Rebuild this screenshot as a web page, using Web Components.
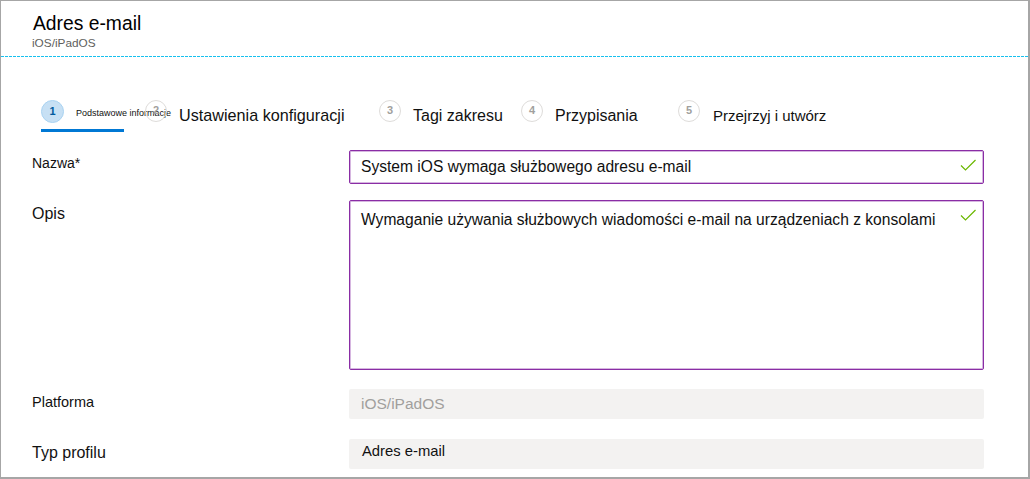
<!DOCTYPE html>
<html lang="pl">
<head>
<meta charset="utf-8">
<title>Adres e-mail</title>
<style>
html, body { margin: 0; background: #fff; }
body { font-family: "Liberation Sans", Arial, sans-serif; color: #111; }
</style>
</head>
<body>
<profile-page>
  <blade-header slot="header" title="Adres e-mail" subtitle="iOS/iPadOS"></blade-header>
  <wizard-steps slot="steps">
    <wizard-step num="1" active style="--w:104px;--gap:12px;--fs:9px;--ty:-3px">Podstawowe informacje</wizard-step>
    <wizard-step num="2" style="--w:234px;--gap:12px;--fs:16.2px;--ty:-1px">Ustawienia konfiguracji</wizard-step>
    <wizard-step num="3" style="--w:142px;--gap:12px">Tagi zakresu</wizard-step>
    <wizard-step num="4" style="--w:157px;--gap:12px">Przypisania</wizard-step>
    <wizard-step num="5" style="--w:180px;--gap:13px;--fs:15px">Przejrzyj i utwórz</wizard-step>
  </wizard-steps>
  <form-row label="Nazwa*" height="30" gap="20" style="--label:14px"><text-box valid>System iOS wymaga służbowego adresu e-mail</text-box></form-row>
  <form-row label="Opis" height="170" gap="19" style="--label:16px;--top:4px"><text-box valid multiline>Wymaganie używania służbowych wiadomości e-mail na urządzeniach z konsolami</text-box></form-row>
  <form-row label="Platforma" height="30" gap="20"><text-box disabled>iOS/iPadOS</text-box></form-row>
  <form-row label="Typ profilu" height="30" gap="0" style="--label:16px;--top:4px"><text-box readonly>Adres e-mail</text-box></form-row>
</profile-page>
<script>
// page frame, grey edge all round
class ProfilePage extends HTMLElement {
  constructor() {
    super();
    this.attachShadow({ mode: "open" }).innerHTML = `
<style>
:host {
  display: block;
  box-sizing: border-box;
  width: 1030px;
  height: 479px;
  overflow: hidden;
  border-style: solid;
  border-color: #a6a6a6;
  border-width: 1px 2px 2px 1px;
}
.form {
  padding: 0 44px 0 31px;
}
</style>
<slot name="header"></slot>
<slot name="steps"></slot>
<div class="form"><slot></slot></div>`;
  }
}

class BladeHeader extends HTMLElement {
  constructor() {
    super();
    this.attachShadow({ mode: "open" }).innerHTML = `
<style>
:host {
  display: block;
  height: 56px;
  box-sizing: border-box;
  padding: 11px 0 0 31px;
  background: repeating-linear-gradient(90deg, #17c0ee 0 3px, #fff 3px 4px) left bottom / 100% 1px no-repeat;
}
.title { font-size: 19.3px; line-height: 24px; color: #000; margin-left: 1px; }
.sub { font-size: 11.8px; line-height: 14px; color: #605e5c; }
</style>
<div class="title">${this.getAttribute("title")}</div>
<div class="sub">${this.getAttribute("subtitle")}</div>`;
  }
}

class WizardSteps extends HTMLElement {
  constructor() {
    super();
    this.attachShadow({ mode: "open" }).innerHTML = `
<style>
:host {
  display: flex;
  box-sizing: border-box;
  height: 93px;
  padding: 43px 0 0 40px;
}
</style>
<slot></slot>`;
  }
}

class WizardStep extends HTMLElement {
  constructor() {
    super();
    this.attachShadow({ mode: "open" }).innerHTML = `
<style>
:host {
  display: flex;
  flex: none;
  align-items: flex-start;
  gap: var(--gap, 12px);
  width: var(--w, 120px);
  height: 32px;
  position: relative;
  white-space: nowrap;
  font-size: var(--fs, 16px);
  color: #111;
}
.num {
  flex: none;
  box-sizing: border-box;
  width: 22px;
  height: 22px;
  border-radius: 50%;
  border: 1.5px solid #dedcda;
  color: #a19f9d;
  font-size: 11px;
  font-weight: 700;
  line-height: 18px;
  text-align: center;
}
.label { line-height: 22px; margin-top: 5px; transform: translateY(var(--ty, 0)); }
:host([active]) .num {
  width: 23px;
  height: 23px;
  background: #c7e0f4;
  border-color: #a9d3f2;
  color: #005a9e;
  line-height: 20px;
}
:host([active]) .bar {
  position: absolute;
  left: 0;
  top: 29px;
  width: 83px;
  height: 3px;
  background: #0078d4;
}
</style>
<span class="num">${this.getAttribute("num")}</span>
<span class="label"><slot></slot></span>
<span class="bar"></span>`;
  }
}

class FormRow extends HTMLElement {
  constructor() {
    super();
    const h = this.getAttribute("height");
    const gap = this.getAttribute("gap");
    this.attachShadow({ mode: "open" }).innerHTML = `
<style>
:host {
  display: grid;
  grid-template-columns: 317px 635px;
  height: ${h}px;
  margin-bottom: ${gap}px;
  font-size: var(--label, 14.5px);
  color: #111;
}
.lbl { line-height: 20px; margin-top: var(--top, 3px); }
</style>
<div class="lbl">${this.getAttribute("label")}</div>
<slot></slot>`;
  }
}

class TextBox extends HTMLElement {
  constructor() {
    super();
    const tick = this.hasAttribute("valid")
      ? `<svg viewBox="0 0 16 12" width="16" height="12"><path d="M1 6.5 5.5 11 15.5 1" fill="none" stroke="#6bb700" stroke-width="1.2"/></svg>`
      : "";
    this.attachShadow({ mode: "open" }).innerHTML = `
<style>
:host {
  display: block;
  box-sizing: border-box;
  height: 100%;
  position: relative;
  border-radius: 2px;
  padding: 0 12px;
  font-size: 15.6px;
  line-height: 30px;
  background: #f3f2f1;
  color: #111;
}
:host([valid]) {
  background: #fff;
  border: 1px solid #8a2da5;
  box-shadow: inset 0 0 0 1px rgba(138, 45, 165, .35);
  padding: 0 11px;
  line-height: 32px;
}
:host([multiline]) { line-height: 38px; }
:host([disabled]) { color: #a19f9d; font-size: 15.5px; }
:host([readonly]) { line-height: 24px; font-size: 14.8px; padding-left: 13px; }
svg { position: absolute; right: 7px; top: 8px; }
</style>
<slot></slot>${tick}`;
  }
}

customElements.define("profile-page", ProfilePage);
customElements.define("blade-header", BladeHeader);
customElements.define("wizard-steps", WizardSteps);
customElements.define("wizard-step", WizardStep);
customElements.define("form-row", FormRow);
customElements.define("text-box", TextBox);
</script>
</body>
</html>
